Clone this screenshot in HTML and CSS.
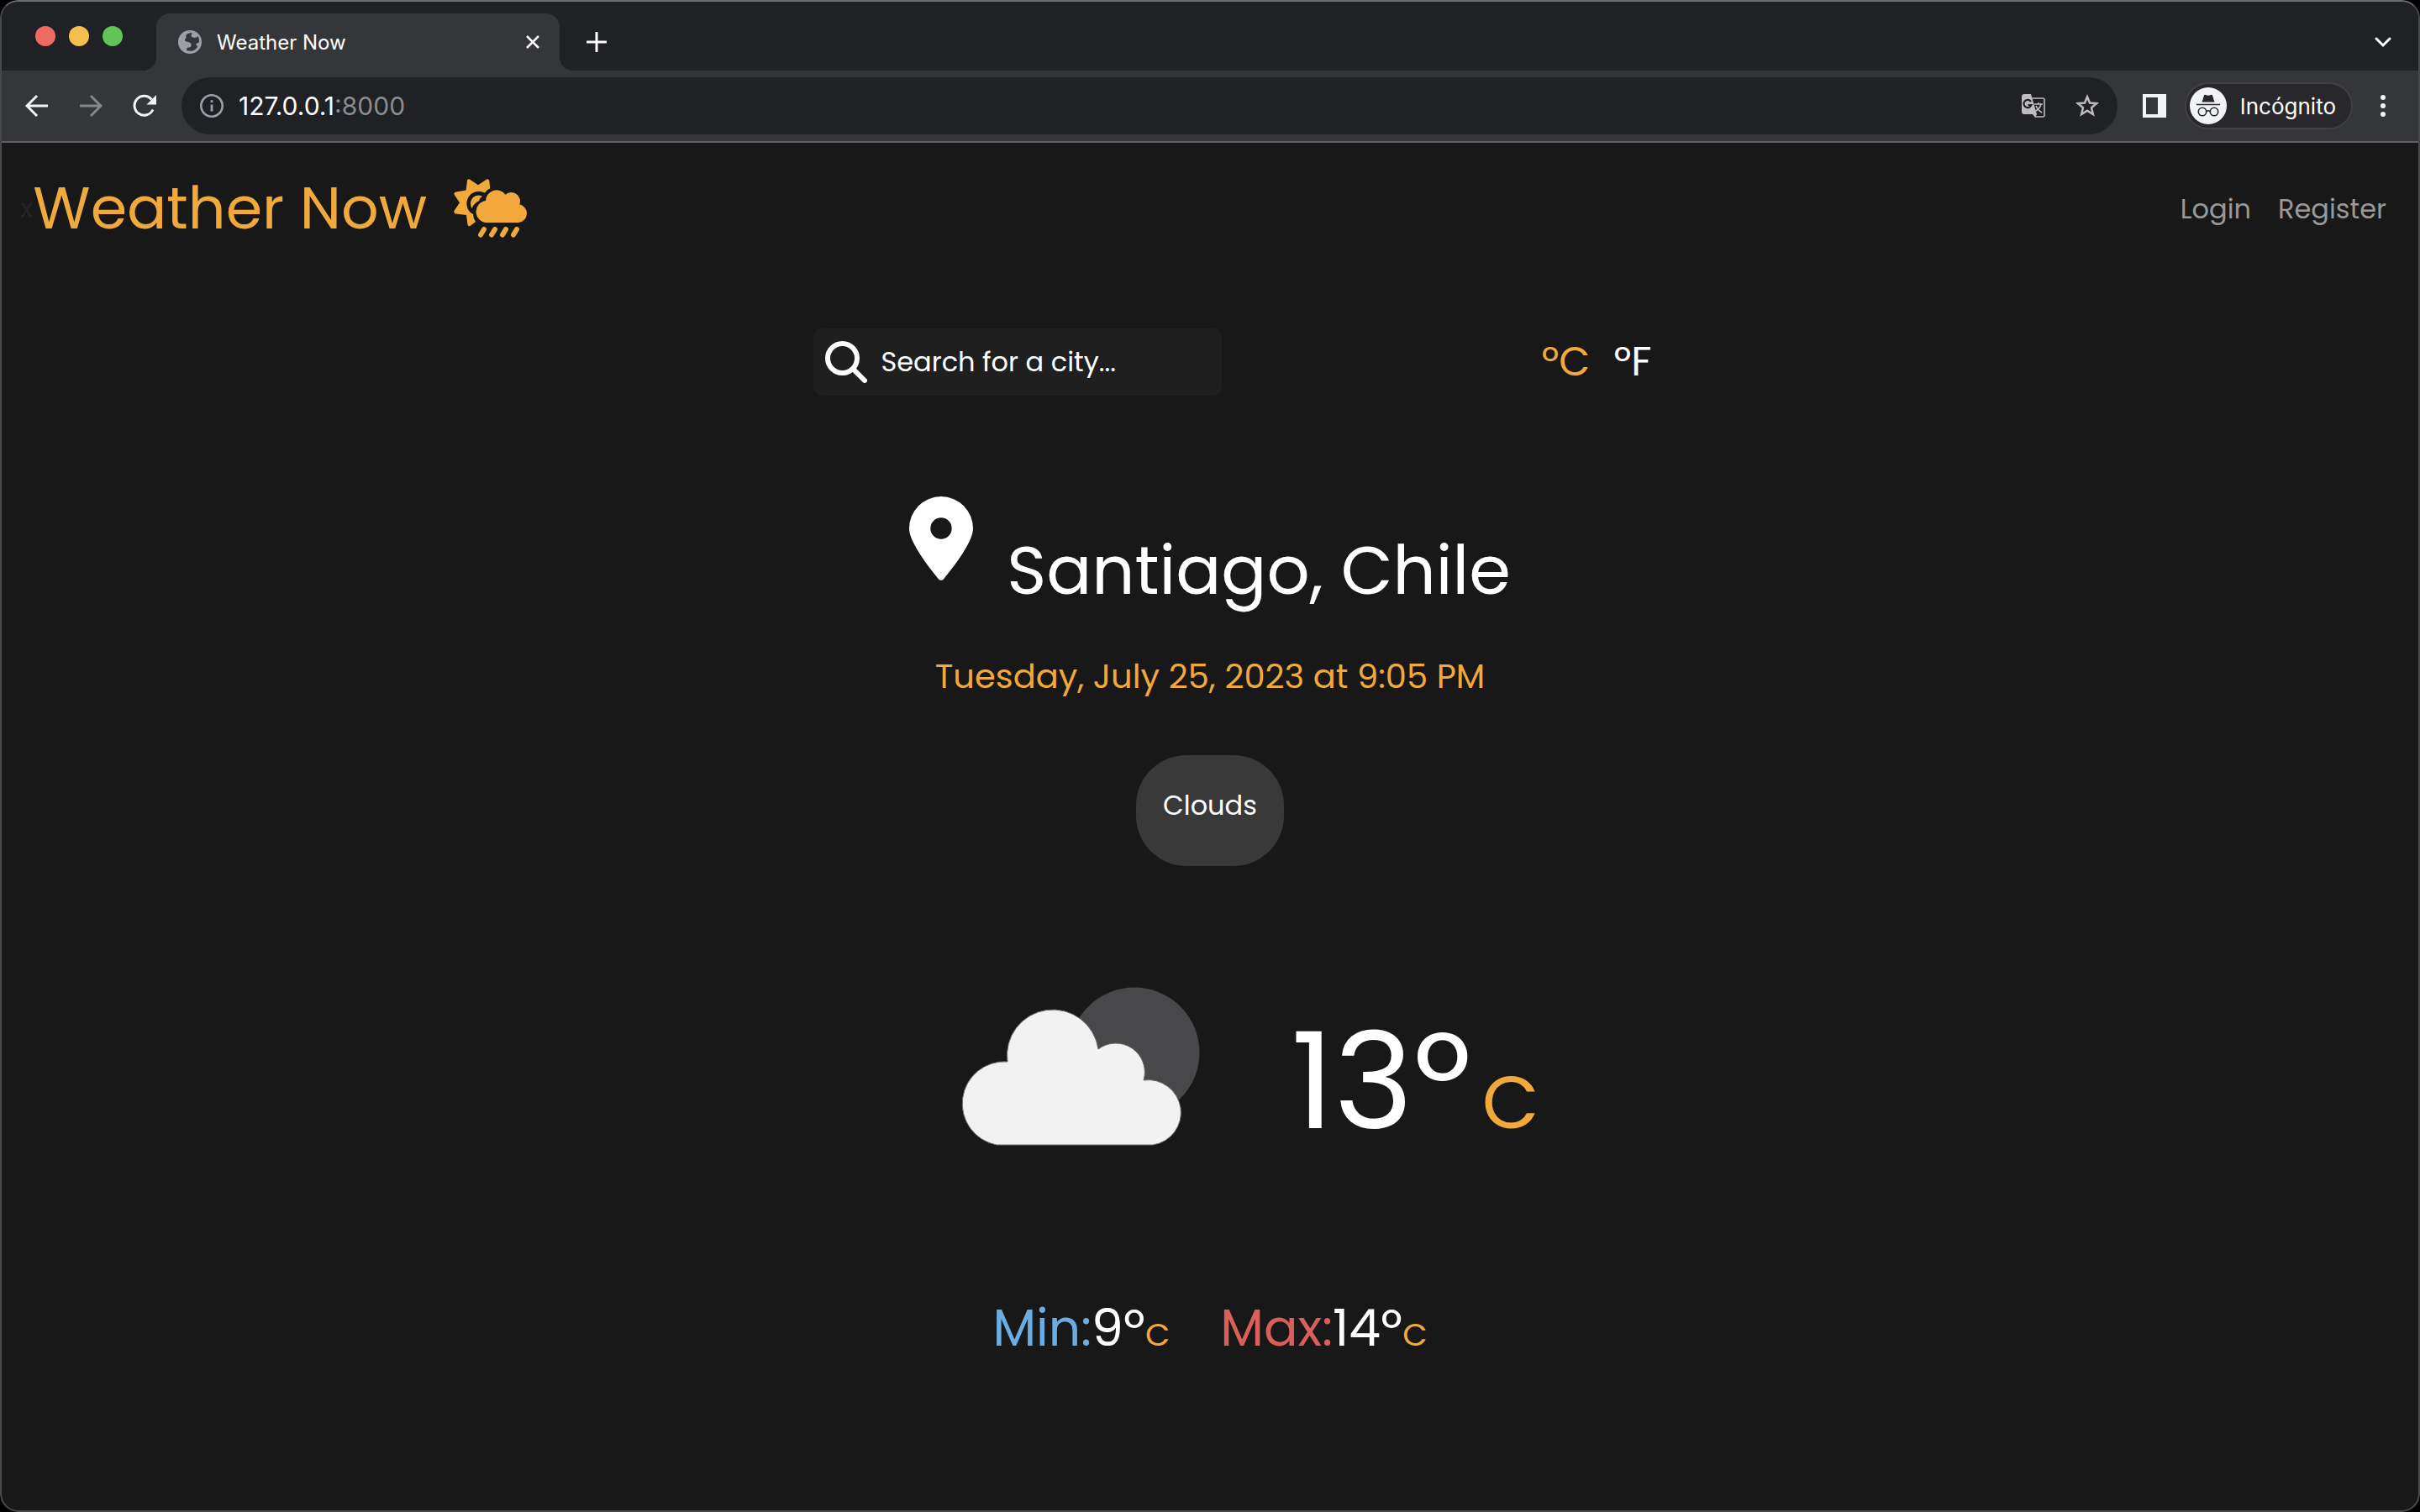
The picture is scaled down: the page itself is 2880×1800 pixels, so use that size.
FILE: index.html
```html
<!DOCTYPE html>
<html lang="en">
<head>
<meta charset="utf-8">
<title>Weather Now</title>
<link rel="stylesheet" href="styles.css">
</head>
<body>
<div class="window">
  <div class="tabstrip">
    <div class="lights">
      <span class="light red"></span><span class="light yellow"></span><span class="light green"></span>
    </div>
    <div class="tab">
      <svg class="i28" viewBox="0 0 28 28"><circle cx="14" cy="14" r="14" fill="#9aa0a6"/><path d="M16.500 3C11 3.500 9 5 9.500 8c.2 2-1.500 2-1.500 3.500 0 2 2 2 4 2.500 3 .7 4 2 3.500 4.500-.3 1.500-1.500 2-3 2-2 0-2.500 1-2.500 3.500 6 2 10.500 0 13-4 .7-2-1-1.500-1.500-2.500-.5-1.500.5-2.500 3-2.500 1-3 .5-6-1-8-1.500 2-4 2.500-6 1.500-2.500-1-2-2.500-1.500-3.500.5-1.200.5-1.500.5-2z" fill="#35363a"/></svg>
      <span class="tab-title">Weather Now</span>
      <button class="icon-btn" aria-label="Close tab"><svg class="i16" viewBox="0 0 16 16"><path d="M1 1l14 14M15 1L1 15" stroke="#fff" stroke-width="2.500" fill="none"/></svg></button>
    </div>
    <button class="icon-btn new-tab" aria-label="New tab"><svg class="i24" viewBox="0 0 24 24"><path d="M12 1v22M1 12h22" stroke="#fff" stroke-width="3" stroke-linecap="round"/></svg></button>
    <button class="icon-btn tab-search" aria-label="Search tabs"><svg class="i20" viewBox="0 0 20 20"><path d="M2 6l8 8 8-8" stroke="#fff" stroke-width="3" stroke-linecap="round" fill="none"/></svg></button>
  </div>
  <div class="toolbar">
    <div class="nav-buttons">
      <button class="icon-btn" aria-label="Back"><svg class="i28" viewBox="0 0 28 28"><path d="M27 14H3M14 2L2 14l12 12" stroke="#f1f3f4" stroke-width="3" fill="none"/></svg></button>
      <button class="icon-btn" aria-label="Forward"><svg class="i28" viewBox="0 0 28 28"><path d="M1 14h24M14 2l12 12-12 12" stroke="#85868a" stroke-width="3" fill="none"/></svg></button>
      <button class="icon-btn" aria-label="Reload"><svg class="i28" viewBox="0 0 28 28"><path d="M24 18.500A11.500 11.500 0 1 1 22.500 6.500" stroke="#f1f3f4" stroke-width="3" fill="none"/><path d="M28 1v11.500H16.500z" fill="#f1f3f4"/></svg></button>
    </div>
    <div class="omnibox">
      <svg class="i28" viewBox="0 0 28 28"><circle cx="14" cy="14" r="12.700" fill="none" stroke="#9aa0a6" stroke-width="2.600"/><path d="M14 12.500v8M14 7.200v2.800" stroke="#9aa0a6" stroke-width="2.800"/></svg>
      <span class="url">127.0.0.1<span class="port">:8000</span></span>
      <button class="icon-btn" aria-label="Translate"><svg class="i28" viewBox="0 0 28 28"><path d="M12 5h13a2 2 0 0 1 2 2v18a2 2 0 0 1-2 2H16" fill="none" stroke="#bdbdbd" stroke-width="1.600"/><path d="M3 0h8l7 24H3a3 3 0 0 1-3-3V3a3 3 0 0 1 3-3zM13 24l3 4 2-4z" fill="#bdbdbd"/><path d="M11 9a4.600 4.600 0 1 0 .5 4H7.500" stroke="#202124" stroke-width="2.200" fill="none"/><path d="M15 12h10M20 10v2M23 12c-1 4-3 6-6 8M17 14c1 3 4 6 7 8" stroke="#bdbdbd" stroke-width="1.600" fill="none"/></svg></button>
      <button class="icon-btn" aria-label="Bookmark"><svg class="i28" viewBox="0 0 28 28"><path d="M14 3.200l3 7.300 8 .6-6 5.200 1.900 7.700L14 19.800 7.100 24 9 16.300 3 11.100l8-.6z" fill="none" stroke="#bdbdbd" stroke-width="2.500"/></svg></button>
    </div>
    <button class="icon-btn panel-btn" aria-label="Side panel"><svg class="i28" viewBox="0 0 28 28"><path d="M0 0h28v28H0zM4 4v20h14V4z" fill="#f1f3f4" fill-rule="evenodd"/></svg></button>
    <button class="profile">
      <svg class="i44" viewBox="0 0 44 44"><circle cx="22" cy="22" r="22" fill="#f1f3f4"/><path d="M14.500 17.500L17 9.500c.3-1 1-1 2-.500 2 1 4 1 6 0 1-.5 1.700-.5 2 .500l2.500 8z" fill="#28282c"/><path d="M8 20.500h28" stroke="#28282c" stroke-width="1.600"/><g fill="none" stroke="#28282c" stroke-width="1.600"><circle cx="15" cy="29" r="4.700"/><circle cx="29" cy="29" r="4.700"/><path d="M19.700 28.500q2.300-1.500 4.600 0"/></g></svg>
      <span>Incógnito</span>
    </button>
    <button class="icon-btn" aria-label="Menu"><svg class="i28" viewBox="0 0 28 28" fill="#f1f3f4"><circle cx="14" cy="4" r="3"/><circle cx="14" cy="14" r="3"/><circle cx="14" cy="24" r="3"/></svg></button>
  </div>

  <header class="site-header">
    <span class="stray">x</span>
    <a class="brand" href="#">Weather Now
      <svg class="brand-icon" viewBox="0 0 88 70" fill="#f2a93b"><path d="M18.500.3L29 7.200 39.500.3Q42 0 42.300 2.500L43.300 11.300Q39.500 12.500 37 16.500 28 12.500 20.500 18 13 25.500 16.500 35 18 39.500 23.300 42 23 47 26 51L19.500 56Q17 57 16.500 54.500L15 43 2.500 41.500Q-.5 40.500.5 38L7 28.300.5 18.500Q0 16 2.500 15.500L14.500 13.500 16 2Q16.500-.200 18.500.3z"/><path d="M34 20.500Q27.500 17.500 22.500 22.500 18 28.500 21.500 35 24 29 30 26.200 30.500 23 34 20.500z"/><path d="M39 52A13 13 0 0 1 38 26.100A13 13 0 0 1 61.500 18.700A10.500 10.500 0 0 1 78.300 30.300A11 11 0 0 1 77 52z"/><path d="M36 60l-4 6.500M49 60l-4 6.500M62 60l-4 6.500M75 60l-4 6.500" stroke="#f2a93b" stroke-width="6" stroke-linecap="round"/></svg>
    </a>
    <nav class="links"><a href="#">Login</a><a href="#">Register</a></nav>
  </header>

  <main class="weather">
    <div class="controls">
      <form class="search">
        <svg class="search-icon" viewBox="0 0 50 50"><circle cx="20.500" cy="20.500" r="17.500" fill="none" stroke="#fff" stroke-width="6"/><path d="M33 33l14 14" stroke="#fff" stroke-width="6" stroke-linecap="round"/></svg>
        <input type="text" aria-label="Search for a city" placeholder="Search for a city...">
      </form>
      <div class="units"><a class="active" href="#">ºC</a><a href="#">ºF</a></div>
    </div>
    <div class="place">
      <svg class="pin" viewBox="0 0 76 100"><path d="M38 0a38 38 0 0 1 38 38C76 54 55 81 41 98.500a4 4 0 0 1-6 0C21 81 0 54 0 38A38 38 0 0 1 38 0zm0 25.300a12.700 12.700 0 1 0 0 25.400 12.700 12.700 0 1 0 0-25.400z" fill="#fff"/></svg>
      <h1>Santiago, Chile</h1>
    </div>
    <p class="date">Tuesday, July 25, 2023 at 9:05 PM</p>
    <p class="condition">Clouds</p>
    <div class="now">
      <svg class="cloud" viewBox="0 0 400 220"><circle cx="302" cy="86" r="77.500" fill="#48484a"/><path d="M138 196A50 50 0 0 1 151 97A54.500 54.500 0 1 1 259 82A34.500 34.500 0 0 1 313 119A38.500 38.500 0 0 1 324 196z" fill="#f2f2f2" stroke="#6a6a6a" stroke-width="1"/></svg>
      <p class="temp">13º<span>C</span></p>
    </div>
    <div class="range">
      <p><span class="min">Min:</span>9º<span class="unit">C</span></p>
      <p><span class="max">Max:</span>14º<span class="unit">C</span></p>
    </div>
  </main>
</div>
</body>
</html>
```
FILE: styles.css
```css
* { box-sizing: border-box; margin: 0; padding: 0; }
body { background: #000; font-family: Poppins, Inter, sans-serif; color: #fff; }
button { border: 0; background: none; color: inherit; font: inherit; }
a { color: inherit; text-decoration: none; }
svg { display: block; flex: none; }

.window { min-height: 100vh; display: flex; flex-direction: column; background: #181818; border: 2px solid #48494b; border-top-color: #6d6e71; border-radius: 22px; overflow: hidden; }
.i16 { width: 16px; height: 16px; }
.i20 { width: 20px; height: 20px; }
.i24 { width: 24px; height: 24px; }
.i28 { width: 28px; height: 28px; }
.i44 { width: 44px; height: 44px; }

.tabstrip { display: flex; height: 82px; padding-top: 14px; background: #202124; font-family: Inter, sans-serif; }
.lights { display: flex; gap: 16px; padding: 15px 40px 0; width: 184px; }
.light { width: 24px; height: 24px; border-radius: 50%; }
.red { background: #ed6b5f; }
.yellow { background: #f5bf4f; }
.green { background: #61c554; }
.tab { position: relative; display: flex; align-items: center; gap: 18px; width: 480px; padding: 0 24px 0 26px; background: #35363a; border-radius: 16px 16px 0 0; }
.tab::before, .tab::after { content: ""; position: absolute; bottom: 0; width: 16px; height: 16px; }
.tab::before { left: -16px; background: radial-gradient(circle at 0 0, #202124 16px, #35363a 16px); }
.tab::after { right: -16px; background: radial-gradient(circle at 100% 0, #202124 16px, #35363a 16px); }
.tab-title { flex: 1; font-size: 24px; font-weight: 400; }
.new-tab { padding: 0 32px; }
.tab-search { margin-left: auto; padding-right: 32px; }

.toolbar { display: flex; align-items: center; height: 86px; padding: 0 28px; background: #35363a; border-bottom: 2px solid #5f6065; font-family: Inter, sans-serif; }
.nav-buttons { display: flex; gap: 36px; margin-right: 30px; }
.omnibox { flex: 1; display: flex; align-items: center; gap: 18px; height: 68px; padding: 0 22px; background: #202124; border-radius: 34px; }
.omnibox .icon-btn + .icon-btn { margin-left: 18px; }
.url { flex: 1; font-size: 30px; }
.port { color: #8b8c8f; }
.panel-btn { margin: 0 22px 0 30px; }
.profile { display: flex; align-items: center; gap: 16px; height: 56px; margin-right: 22px; padding: 0 18px 0 4px; background: #28282c; border: 2px solid #404145; border-radius: 28px; font-size: 26px; }

.site-header { display: flex; align-items: center; height: 156px; padding: 0 38px 0 22px; }
.stray { color: #212529; font-size: 32px; }
.brand { display: flex; align-items: center; gap: 32px; font-size: 70px; line-height: 80px; color: #f2a93b; }
.brand-icon { width: 88px; height: 70px; }
.links { display: flex; gap: 32px; margin-left: auto; padding-top: 2px; font-size: 32px; color: #999; }

.weather { display: flex; flex-direction: column; align-items: center; padding-top: 65px; }
.controls { display: flex; align-items: center; padding-left: 54px; }
.search { display: flex; align-items: center; gap: 16px; width: 486px; height: 80px; margin-right: 380px; padding: 0 14px; background: #1f1f1f; border-radius: 10px; }
.search-icon { width: 50px; height: 50px; }
.search input { flex: 1; min-width: 0; border: 0; outline: 0; background: none; color: #fff; font: inherit; font-size: 32px; line-height: 40px; }
.search input::placeholder { color: #fff; opacity: 1; }
.units { display: flex; gap: 28px; font-size: 48px; line-height: 60px; }
.active { color: #f2a93b; }
.place { display: flex; align-items: flex-end; gap: 40px; padding-top: 120px; }
.pin { width: 76px; height: 100px; margin-bottom: 38px; }
.place h1 { font-size: 80px; line-height: 100px; font-weight: 400; }
.date { margin-top: 46px; font-size: 40px; line-height: 60px; color: #f2a93b; }
.condition { margin-top: 64px; padding: 40px 32px 52px; border-radius: 60px; background: #393939; font-size: 32px; line-height: 40px; }
.now { display: flex; align-items: flex-end; gap: 88px; margin-top: 136px; }
.cloud { width: 400px; height: 220px; }
.temp { font-size: 160px; line-height: 200px; }
.temp span { margin-left: 12px; font-size: 88px; line-height: 80px; color: #f2a93b; }
.range { display: flex; gap: 60px; margin-top: 154px; padding-bottom: 60px; font-size: 60px; line-height: 80px; }
.min { color: #6bade3; }
.max { color: #d95f5b; }
.unit { font-size: 38px; line-height: 40px; color: #f2a93b; }
```
